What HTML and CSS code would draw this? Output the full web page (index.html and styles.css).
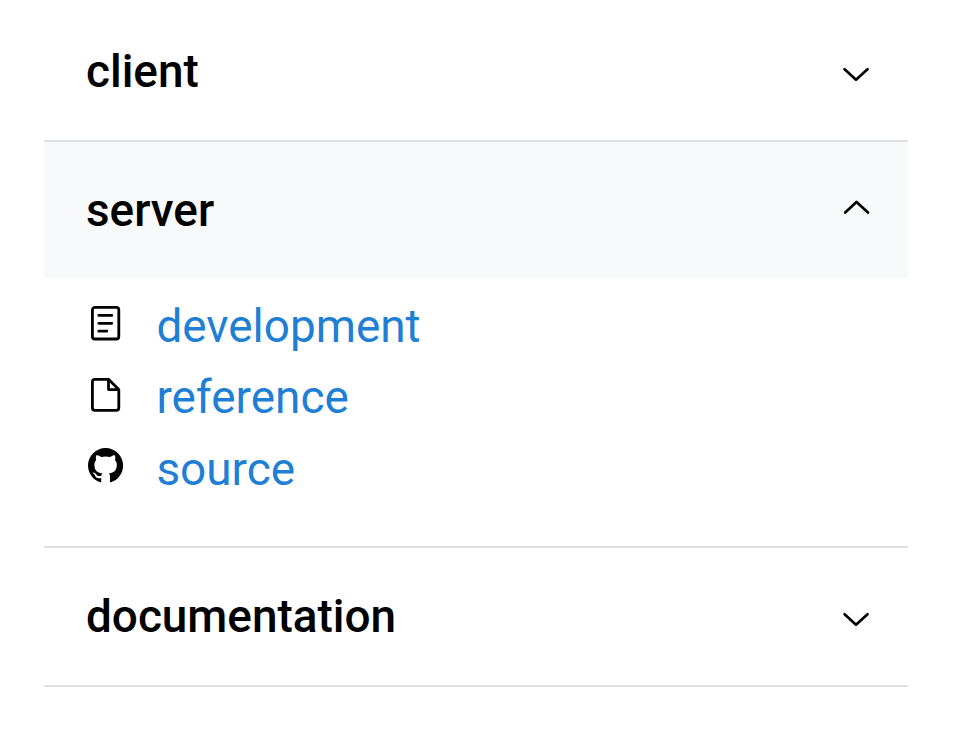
FILE: index.html
```html
<!DOCTYPE html>
<html lang="en">
<head>
<meta charset="utf-8">
<title>Project navigation</title>
<link rel="stylesheet" href="styles.css">
</head>
<body>
<main class="accordion">
  <section class="section">
    <div class="header"><h2 class="title">client</h2>
      <svg class="chevron chevron-down" viewBox="0 0 30 20"><path d="M3.600 5.200L15 15.700L26.500 5.200"/></svg></div>
  </section>
  <section class="section">
    <div class="header header-open"><h2 class="title">server</h2>
      <svg class="chevron chevron-up" viewBox="0 0 30 20"><path d="M4.200 14.500L15.500 4L27 14.500"/></svg></div>
    <ul class="links">
      <li class="item"><svg class="icon" viewBox="0 0 36 36"><rect x="4.400" y="2.400" width="26.400" height="31.600" rx="2.500"/><path d="M10.800 10.400H23.800M10.800 18.300H23.800M10.800 26.200H18.800"/></svg><a class="link">development</a></li>
      <li class="item"><svg class="icon" viewBox="0 0 36 36"><path d="M20.500 2.300H6.900a2.500 2.500 0 0 0-2.500 2.500V30.800a2.500 2.500 0 0 0 2.500 2.500H28.300a2.500 2.500 0 0 0 2.500-2.500V12.600L20.500 2.300V12.600H30.800"/></svg><a class="link">reference</a></li>
      <li class="item"><svg class="icon github" viewBox="0 0 16.400 16.400"><path d="M8 0C3.580 0 0 3.580 0 8c0 3.540 2.290 6.530 5.470 7.590.4.070.55-.17.55-.38 0-.19-.01-.82-.01-1.490-2.010.37-2.530-.49-2.690-.94-.09-.23-.48-.94-.82-1.130-.28-.15-.68-.52-.01-.53.63-.01 1.080.58 1.230.82.72 1.210 1.870.87 2.330.66.07-.52.28-.87.51-1.070-1.780-.2-3.640-.89-3.640-3.950 0-.87.31-1.590.82-2.150-.08-.2-.36-1.020.08-2.120 0 0 .67-.21 2.200.82.64-.18 1.320-.27 2-.27s1.360.09 2 .27c1.530-1.040 2.200-.82 2.200-.82.44 1.100.16 1.920.08 2.120.51.56.82 1.270.82 2.150 0 3.070-1.870 3.750-3.650 3.950.29.25.54.73.54 1.480 0 1.070-.01 1.930-.01 2.200 0 .21.15.46.55.38A8.010 8.010 0 0 0 16 8c0-4.420-3.580-8-8-8Z"/></svg><a class="link">source</a></li>
    </ul>
  </section>
  <section class="section">
    <div class="header"><h2 class="title">documentation</h2>
      <svg class="chevron chevron-down" viewBox="0 0 30 20"><path d="M3.600 5.200L15 15.700L26.500 5.200"/></svg></div>
  </section>
</main>
</body>
</html>
```
FILE: styles.css
```css
body {
  margin: 0;
  background: #fff;
  color: #000;
  font-family: Roboto, sans-serif;
}
.accordion {
  width: 864px;
  margin: 3px 0 0 44px;
}
.section {
  border-bottom: 2px solid #dee0e3;
}
.header {
  height: 137px;
  padding: 0 37px 0 42px;
  display: flex;
  align-items: center;
  justify-content: space-between;
}
.header-open {
  height: 136px;
  background: #f8f9fb;
}
.title {
  margin: 0;
  padding-bottom: 1px;
  font-size: 45.900px;
  line-height: 54px;
  font-weight: 500;
}
.header-open .title {
  padding-bottom: 0;
}
.chevron {
  width: 30px;
  height: 20px;
  fill: none;
  stroke: #000;
  stroke-width: 2.700;
  stroke-linecap: round;
  stroke-linejoin: round;
}
.chevron-down { margin-top: 4px; }
.chevron-up { margin-bottom: 4px; }
.links {
  list-style: none;
  margin: 0;
  padding: 12px 44px 41.500px;
}
.item {
  height: 71.500px;
  display: flex;
  align-items: center;
  gap: 32.400px;
}
.icon {
  width: 36px;
  height: 36px;
  margin-bottom: 5px;
  fill: none;
  stroke: #000;
  stroke-width: 2.800;
  stroke-linecap: round;
  stroke-linejoin: round;
}
.github {
  margin-bottom: 6px;
  fill: #000;
  stroke: none;
}
.link {
  color: #1f7fd4;
  font-size: 45.900px;
  line-height: 54px;
}
```
